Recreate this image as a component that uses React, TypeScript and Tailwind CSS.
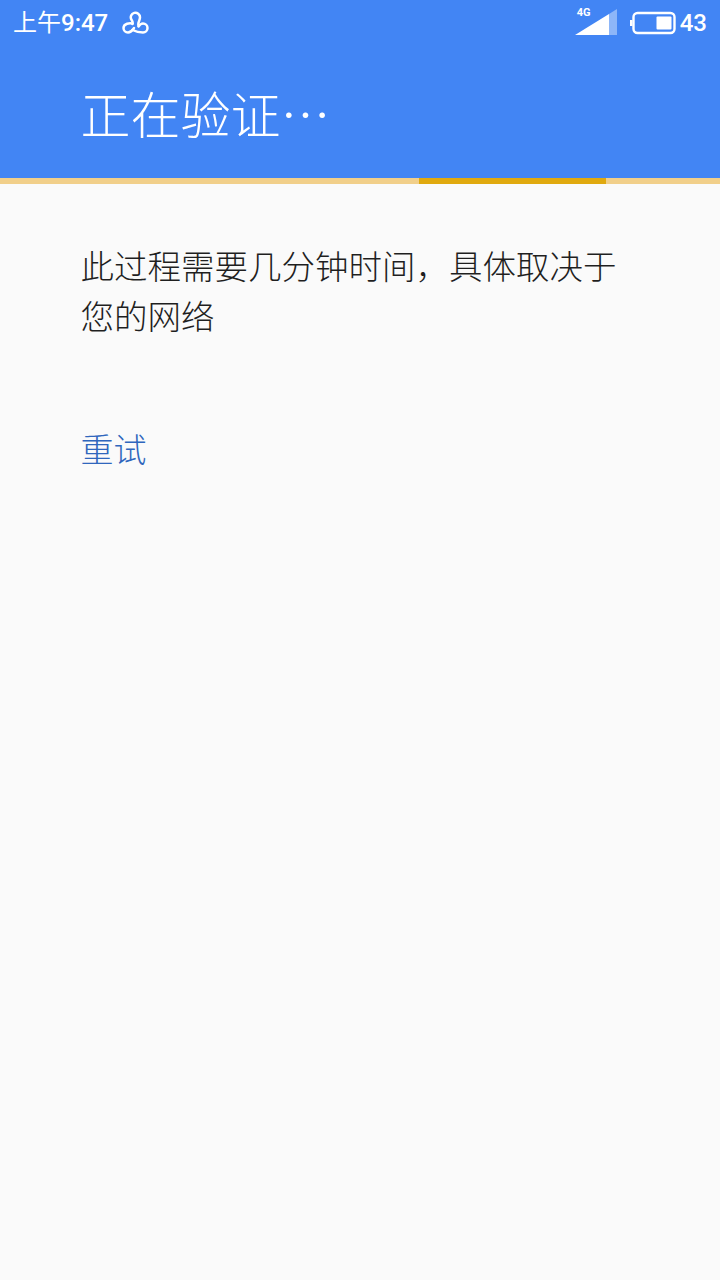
const cjk = "font-['Roboto','Noto_Sans_CJK_SC',sans-serif]";

function NetworkIcon() {
  return (
    <svg width="28" height="24" viewBox="0 0 28 24" fill="none" stroke="white" strokeWidth="2.5" strokeLinecap="round" strokeLinejoin="round">
      {/* one looped stroke, three lobes */}
      <path d="M16.5 14.5 C15.5 11.5 18 10 18 6.3 A4.6 4.6 0 1 0 9.4 8.6 C10.4 10.4 11.2 11.4 10.5 13" />
      <path d="M10.5 12.6 C8 11.6 1.5 12.5 1.5 17 A4.5 4.5 0 0 0 6 21.5 C9.5 21.5 10.5 19 12 17" />
      <path d="M10.5 19 C13.5 20.5 16 21.5 21 21.5 A4.5 4.5 0 0 0 21 12.5 C18.5 12.5 17.5 14 16.5 15.5" />
    </svg>
  );
}

function SignalIcon() {
  return (
    <svg width="44" height="28" viewBox="0 0 44 28">
      <path d="M1 26 L35 5 V26 Z" fill="white" />
      <path d="M35 5 L43 0 V26 H35 Z" fill="white" fillOpacity="0.4" />
    </svg>
  );
}

function BatteryIcon() {
  return (
    <svg width="46" height="24" viewBox="0 0 46 24">
      <rect x="0" y="9" width="2.5" height="6" fill="white" />
      <rect x="3.5" y="2" width="41" height="20" rx="4" fill="none" stroke="white" strokeWidth="2.4" />
      <rect x="26.5" y="5.5" width="15" height="13" rx="1" fill="white" />
    </svg>
  );
}

export default function App() {
  return (
    <div className={`min-h-[1280px] bg-[#fafafa] ${cjk}`}>
      <div className="bg-[#4285f4] text-white">
        {/* Status bar */}
        <div className="flex h-[46px] items-center justify-between pl-[13px] pr-[13px]">
          <div className="flex items-center gap-[14px]">
            <span className="text-[24px] leading-none">
              上午<span className="font-medium">9:47</span>
            </span>
            <NetworkIcon />
          </div>
          <div className="flex items-center">
            <div className="relative mr-[12px]">
              <SignalIcon />
              <span className="absolute left-[3px] top-[-2px] text-[11px] font-bold leading-none">4G</span>
            </div>
            <BatteryIcon />
            <span className="ml-[4px] text-[24px] font-medium leading-none">43</span>
          </div>
        </div>
        {/* Title */}
        <div className="flex h-[132px] items-start pl-[80.5px] pt-[39px]">
          <h1 className="text-[50px] font-light leading-[64px]">正在验证⋯</h1>
        </div>
      </div>

      {/* Progress */}
      <div className="flex h-[6px] bg-[#f1cf8a]">
        <div className="w-[419px]" />
        <div className="w-[187px] bg-[#e0a90f]" />
      </div>

      <div className="pl-[80.5px] pr-[100px] pt-[59px]">
        <p className="text-[33.5px] font-light leading-[50px] text-[#1f1f1f]">
          此过程需要几分钟时间，具体取决于您的网络
        </p>
        <button className="mt-[83px] block text-[33px] font-light leading-[50px] text-[#2f66bd]">重试</button>
      </div>
    </div>
  );
}
